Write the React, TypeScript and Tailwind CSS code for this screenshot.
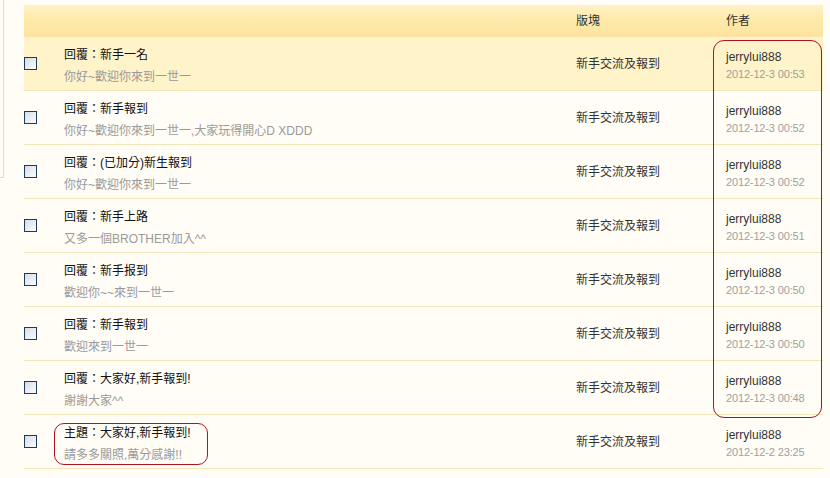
import React from 'react';

type Post = {
  title: string;
  excerpt: string;
  forum: string;
  author: string;
  time: string;
};

const posts: Post[] = [
  { title: '回覆：新手一名', excerpt: '你好~歡迎你來到一世一', forum: '新手交流及報到', author: 'jerrylui888', time: '2012-12-3 00:53' },
  { title: '回覆：新手報到', excerpt: '你好~歡迎你來到一世一,大家玩得開心D XDDD', forum: '新手交流及報到', author: 'jerrylui888', time: '2012-12-3 00:52' },
  { title: '回覆：(已加分)新生報到', excerpt: '你好~歡迎你來到一世一', forum: '新手交流及報到', author: 'jerrylui888', time: '2012-12-3 00:52' },
  { title: '回覆：新手上路', excerpt: '又多一個BROTHER加入^^', forum: '新手交流及報到', author: 'jerrylui888', time: '2012-12-3 00:51' },
  { title: '回覆：新手报到', excerpt: '歡迎你~~來到一世一', forum: '新手交流及報到', author: 'jerrylui888', time: '2012-12-3 00:50' },
  { title: '回覆：新手報到', excerpt: '歡迎來到一世一', forum: '新手交流及報到', author: 'jerrylui888', time: '2012-12-3 00:50' },
  { title: '回覆：大家好,新手報到!', excerpt: '謝謝大家^^', forum: '新手交流及報到', author: 'jerrylui888', time: '2012-12-3 00:48' },
  { title: '主題：大家好,新手報到!', excerpt: '請多多關照,萬分感謝!!', forum: '新手交流及報到', author: 'jerrylui888', time: '2012-12-2 23:25' },
];

function Checkbox() {
  return (
    <div className="w-[13px] h-[13px] shrink-0 border border-[#1f3b58] bg-linear-to-br from-[#d6dde8] to-[#fbfcfd]" />
  );
}

function PostRow({ post, active }: { post: Post; active: boolean }) {
  return (
    <div
      className={`flex items-center h-[54px] border-b border-[#f2e6bd] ${active ? 'bg-[#fff3c9]' : ''}`}
    >
      <div className="w-[552px] flex items-center">
        <Checkbox />
        <div className="ml-[27px] flex flex-col gap-[4px] mt-[5px]">
          <div className="text-[12px] leading-[18px] text-[#111]">{post.title}</div>
          <div className="text-[12px] leading-[18px] text-[#9a9a9a]">{post.excerpt}</div>
        </div>
      </div>
      <div className="w-[150px] text-[12px] text-[#333]">{post.forum}</div>
      <div className="flex-1 flex flex-col mt-[5px]">
        <div className="text-[12px] leading-[17px] text-[#333]">{post.author}</div>
        <div className="text-[11px] leading-[17px] tracking-[-0.15px] text-[#a0a0a0]">{post.time}</div>
      </div>
    </div>
  );
}

export default function App() {
  return (
    <div
      className="min-h-screen bg-[#fffdf6] flex items-start"
      style={{ fontFamily: '"Liberation Sans", "Noto Sans CJK TC", sans-serif' }}
    >
      <div className="w-[4px] h-[178px] shrink-0 border-r border-b border-[#eadca6]" />
      <div className="relative ml-[20px] mt-[5px] w-[799px]">
        <div className="flex items-center h-[32px] bg-linear-to-b from-[#fff1c4] via-[#fee9a9] to-[#fde3a1] text-[12px] text-[#333]">
          <div className="w-[552px]" />
          <div className="w-[150px]">版塊</div>
          <div className="flex-1">作者</div>
        </div>
        {posts.map((p, i) => (
          <PostRow key={i} post={p} active={i === 0} />
        ))}

        {/* red highlight outlines */}
        <div className="absolute left-[689px] top-[35px] w-[109px] h-[378px] rounded-[11px] border border-[#b0121f]" />
        <div className="absolute left-[30px] top-[418px] w-[154px] h-[42px] rounded-[10px] border border-[#b0121f]" />
      </div>
    </div>
  );
}
